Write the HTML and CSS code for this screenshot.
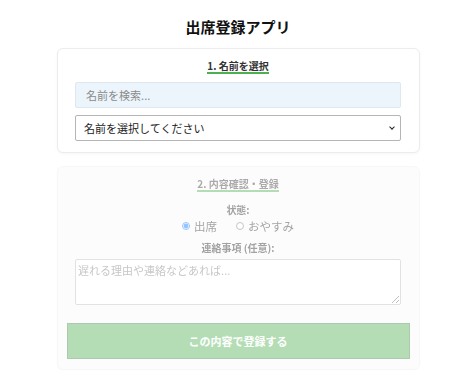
FILE: index.html
```html
<!DOCTYPE html>
<html lang="ja">
<head>
<meta charset="utf-8">
<title>出席登録アプリ</title>
<link rel="stylesheet" href="styles.css">
</head>
<body>
<main class="app">
  <h1 class="app-title">出席登録アプリ</h1>

  <section class="card">
    <h2 class="step-title">1. 名前を選択</h2>
    <input class="search" type="text" placeholder="名前を検索...">
    <div class="select-wrap">
      <select class="name-select">
        <option>名前を選択してください</option>
      </select>
    </div>
  </section>

  <section class="card card-disabled">
    <h2 class="step-title">2. 内容確認・登録</h2>
    <div class="field">
      <span class="field-label">状態:</span>
      <div class="radios">
        <label class="radio"><input type="radio" name="status" checked> 出席</label>
        <label class="radio"><input type="radio" name="status"> おやすみ</label>
      </div>
    </div>
    <div class="field field-notes">
      <span class="field-label">連絡事項 (任意):</span>
      <textarea class="notes" placeholder="遅れる理由や連絡などあれば..."></textarea>
    </div>
    <button class="submit" type="button">この内容で登録する</button>
  </section>
</main>
</body>
</html>
```

FILE: styles.css
```css
* { box-sizing: border-box; }

html, body { background: #ffffff; }

body {
  margin: 0;
  padding: 0 0 0 16px;
  font-family: "Noto Sans CJK JP", "Noto Sans", sans-serif;
  color: #222;
}

.app {
  width: 363px;
  margin: 0 auto;
  display: flex;
  flex-direction: column;
}

.app-title {
  margin: 17px 0 11px;
  font-size: 15px;
  line-height: 20px;
  font-weight: 700;
  text-align: center;
  color: #111;
}

.card {
  display: flex;
  flex-direction: column;
  align-items: center;
  background: #fff;
  border: 1px solid #ececec;
  border-radius: 6px;
  box-shadow: 0 1px 3px rgba(0,0,0,0.04);
  padding: 11px 9px 11px;
}

.card + .card { margin-top: 13px; }

.card-disabled {
  opacity: 0.42;
  background: #f8f8f8;
  padding-bottom: 10px;
}

.step-title {
  margin: 0;
  font-size: 10px;
  line-height: 12px;
  font-weight: 700;
  color: #333;
  border-bottom: 2px solid #4caf50;
}

.search {
  margin-top: 8px;
  width: 95%;
  height: 26px;
  padding: 0 10px;
  font-family: inherit;
  font-size: 11px;
  background: #edf5fc;
  border: 1px solid #dfe8ee;
  border-radius: 2px;
  color: #333;
  outline: none;
}
.search::placeholder { color: #8a8a8a; }

.select-wrap {
  position: relative;
  margin-top: 7px;
  width: 95%;
}

.select-wrap::after {
  content: "";
  position: absolute;
  right: 7px;
  top: 10px;
  width: 3px;
  height: 3px;
  border-right: 1.5px solid #222;
  border-bottom: 1.5px solid #222;
  transform: rotate(45deg);
  pointer-events: none;
}

.name-select {
  display: block;
  width: 100%;
  height: 26px;
  padding: 0 8px;
  font-family: inherit;
  font-size: 11px;
  color: #222;
  background: #fff;
  border: 1px solid #b5b5b5;
  border-radius: 2px;
  -webkit-appearance: none;
  appearance: none;
}

.field {
  width: 100%;
  display: flex;
  flex-direction: column;
  align-items: center;
  margin-top: 11px;
}

.field-notes { margin-top: 8px; }

.field-label {
  font-size: 10px;
  line-height: 14px;
  font-weight: 700;
  color: #222;
}

.radios {
  margin-top: 2px;
  display: flex;
  gap: 19px;
  font-size: 11.5px;
  line-height: 14px;
  color: #222;
}

.radio {
  display: flex;
  align-items: center;
  gap: 4px;
}

.radio input {
  margin: 0;
  width: 8px;
  height: 8px;
}

.notes {
  margin-top: 4px;
  width: 95%;
  height: 46px;
  font-family: inherit;
  font-size: 11px;
  border: 1px solid #bbb;
  border-radius: 2px;
  padding: 2px;
  resize: vertical;
}
.notes::placeholder { color: #777; }

.submit {
  margin-top: 18px;
  width: 100%;
  height: 36px;
  font-family: inherit;
  font-size: 11px;
  font-weight: 700;
  color: #fff;
  background: #4caf50;
  border: 1px solid #3f7f42;
  border-radius: 0;
}
```
